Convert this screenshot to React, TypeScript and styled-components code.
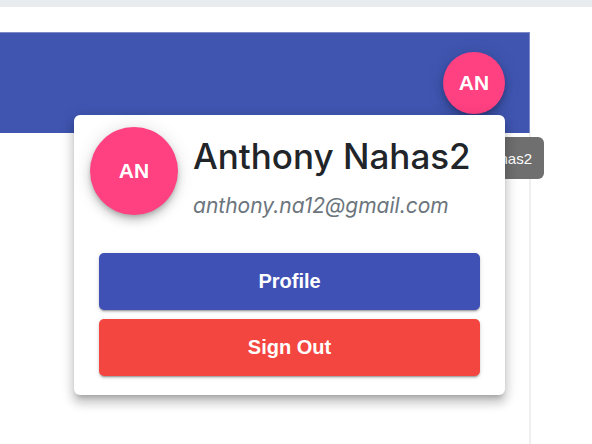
import React from "react";
import styled, { createGlobalStyle } from "styled-components";

const GlobalStyle = createGlobalStyle`
  html, body {
    margin: 0;
    padding: 0;
    background: #fff;
    font-family: "Liberation Sans", Arial, sans-serif;
  }
`;

//styles start
const Page = styled.div`
  position: relative;
  width: 592px;
  height: 444px;
  overflow: hidden;
  display: flex;
  flex-direction: column;
`;
const TopStrip = styled.div`
  height: 7px;
  background: #e9ecef;
  flex-shrink: 0;
`;
const Main = styled.div`
  flex: 1;
  display: flex;
  flex-direction: column;
  padding-top: 25px;
  width: 531px;
`;
const AppBar = styled.header`
  height: 100px;
  background: #3f55b0;
  border-top: 1px solid #7d88c8;
  border-right: 1px solid #7d88c8;
  display: flex;
  align-items: center;
  justify-content: flex-end;
  padding-right: 24px;
  box-sizing: content-box;
  width: 505px;
`;
const Content = styled.div`
  flex: 1;
  border-right: 2px solid #efefef;
`;

type AvatarProps = {
  size: number;
  fontSize: number;
};
const Avatar = styled.div<AvatarProps>`
  width: ${({ size }) => size}px;
  height: ${({ size }) => size}px;
  border-radius: 50%;
  background: #ff4081;
  color: #fff;
  display: flex;
  align-items: center;
  justify-content: center;
  flex-shrink: 0;
  font-weight: 700;
  font-size: ${({ fontSize }) => fontSize}px;
  box-shadow: 0 3px 5px -1px rgba(0, 0, 0, 0.2), 0 6px 10px 0 rgba(0, 0, 0, 0.14),
    0 1px 18px 0 rgba(0, 0, 0, 0.12);
`;

const Tooltip = styled.div`
  position: absolute;
  top: 137px;
  right: 48px;
  height: 42px;
  padding: 0 12px;
  display: flex;
  align-items: center;
  background: #6f6f6f;
  color: #fff;
  font-size: 15px;
  border-radius: 6px;
  white-space: nowrap;
`;

const Card = styled.div`
  position: absolute;
  top: 115px;
  left: 74px;
  width: 431px;
  background: #fff;
  border-radius: 6px;
  box-shadow: 0 5px 5px -3px rgba(0, 0, 0, 0.2), 0 8px 10px 1px rgba(0, 0, 0, 0.14),
    0 3px 14px 2px rgba(0, 0, 0, 0.12);
  display: flex;
  flex-direction: column;
`;
const CardHeader = styled.div`
  display: flex;
  align-items: flex-start;
  gap: 15px;
  padding: 12px 16px 0;
`;
const Info = styled.div`
  padding-top: 7px;
  font-family: Inter, "Liberation Sans", sans-serif;
`;
const Name = styled.div`
  font-size: 35px;
  line-height: 44px;
  font-weight: 500;
  color: #212529;
  white-space: nowrap;
`;
const Email = styled.div`
  margin-top: 15px;
  font-size: 21px;
  line-height: 25px;
  font-style: italic;
  color: #6c757d;
`;
const Actions = styled.div`
  display: flex;
  flex-direction: column;
  gap: 9px;
  padding: 35px 25px 19px;
`;

type ButtonProps = {
  color: string;
};
const ActionButton = styled.button<ButtonProps>`
  height: 57px;
  border: none;
  border-radius: 5px;
  background: ${({ color }) => color};
  color: #fff;
  font-family: "Liberation Sans", Arial, sans-serif;
  font-size: 20px;
  font-weight: 700;
  cursor: pointer;
  box-shadow: 0 3px 1px -2px rgba(0, 0, 0, 0.2), 0 2px 2px 0 rgba(0, 0, 0, 0.14),
    0 1px 5px 0 rgba(0, 0, 0, 0.12);
`;
//styles end

const user = {
  name: "Anthony Nahas2",
  email: "anthony.na12@gmail.com",
  initials: "AN",
};

const App: React.FC = () => {
  return (
    <Page>
      <GlobalStyle />
      <TopStrip />
      <Main>
        <AppBar>
          <Avatar size={62} fontSize={21}>
            {user.initials}
          </Avatar>
        </AppBar>
        <Content />
      </Main>
      <Tooltip>{user.name}</Tooltip>
      <Card>
        <CardHeader>
          <Avatar size={88} fontSize={21}>
            {user.initials}
          </Avatar>
          <Info>
            <Name>{user.name}</Name>
            <Email>{user.email}</Email>
          </Info>
        </CardHeader>
        <Actions>
          <ActionButton color="#3f51b5">Profile</ActionButton>
          <ActionButton color="#f44640">Sign Out</ActionButton>
        </Actions>
      </Card>
    </Page>
  );
};

export default App;
